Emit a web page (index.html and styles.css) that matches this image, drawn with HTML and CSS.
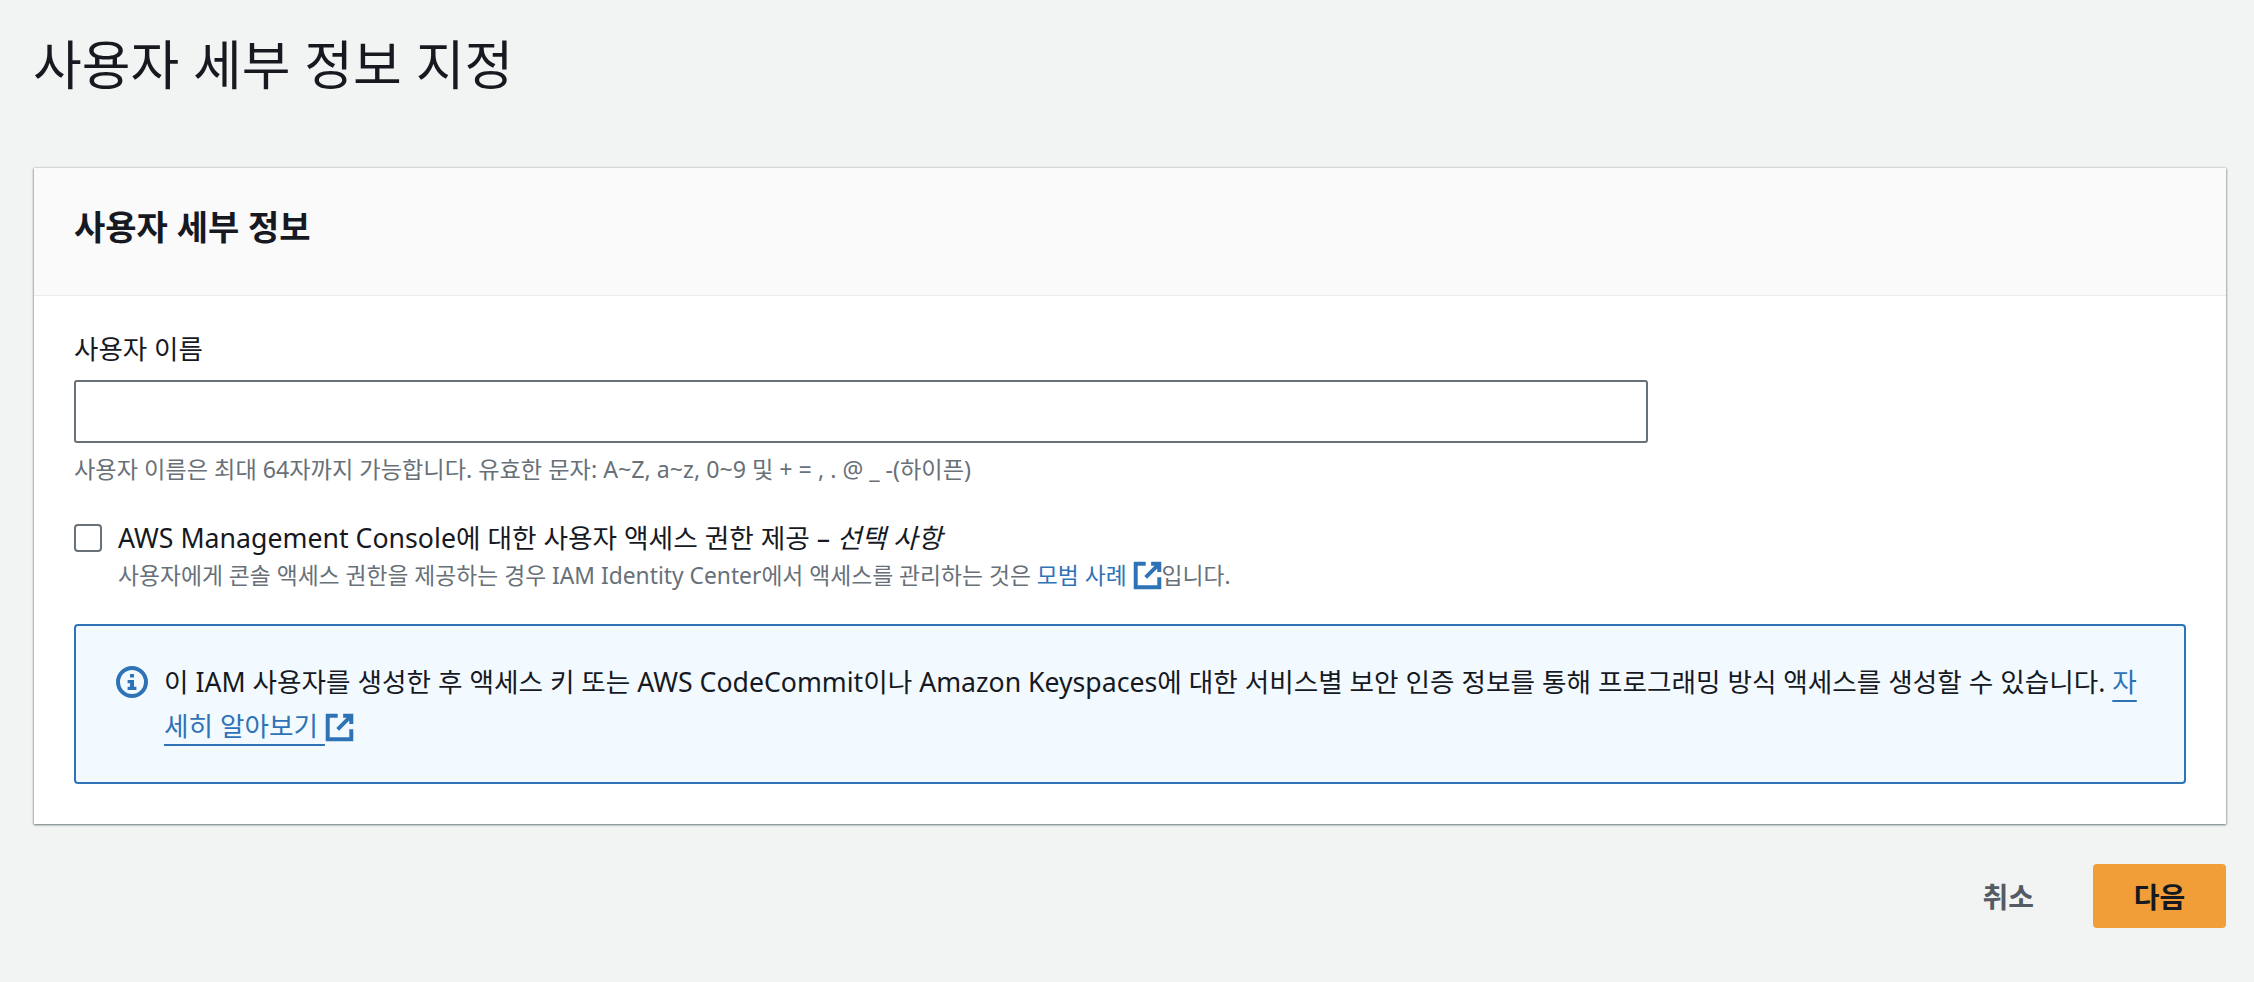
FILE: index.html
```html
<!DOCTYPE html>
<html lang="ko">
<head>
<meta charset="utf-8">
<title>사용자 세부 정보 지정</title>
<link rel="stylesheet" href="styles.css">
</head>
<body>
<main class="page">
  <h1 class="title">사용자 세부 정보 지정</h1>
  <section class="card">
    <header class="card-header"><h2 class="card-title">사용자 세부 정보</h2></header>
    <div class="card-body">
      <div class="field">
        <label class="field-label" for="username">사용자 이름</label>
        <input class="text-input" id="username" type="text">
        <p class="hint">사용자 이름은 최대 64자까지 가능합니다. 유효한 문자: A~Z, a~z, 0~9 및 + = , . @ _ -(하이픈)</p>
      </div>
      <div class="check-row">
        <span class="checkbox"></span>
        <div class="check-text">
          <div class="check-label">AWS Management Console에 대한 사용자 액세스 권한 제공 – <em>선택 사항</em></div>
          <div class="check-desc">사용자에게 콘솔 액세스 권한을 제공하는 경우 IAM Identity Center에서 액세스를 관리하는 것은 <a class="plain-link">모범 사례</a> <svg class="ext-icon" viewBox="0 0 16 16"><path d="M10 1.5h4.5V6M14 2L7 9M14.5 9v5.5h-13v-13H7"/></svg>입니다.</div>
        </div>
      </div>
      <div class="alert">
        <svg class="info-icon" viewBox="0 0 16 16"><circle class="info-ring" cx="8" cy="8" r="7"/><path class="info-glyph" d="M7 4h2v1.8H7zM5.8 7h3.2v3.4h1.2V12H5.8v-1.6H7V8.6H5.8z"/></svg>
        <p class="alert-text">이 IAM 사용자를 생성한 후 액세스 키 또는 AWS CodeCommit이나 Amazon Keyspaces에 대한 서비스별 보안 인증 정보를 통해 프로그래밍 방식 액세스를 생성할 수 있습니다. <a class="under-link">자세히 알아보기&nbsp;</a><svg class="ext-icon" viewBox="0 0 16 16"><path d="M10 1.5h4.5V6M14 2L7 9M14.5 9v5.5h-13v-13H7"/></svg></p>
      </div>
    </div>
  </section>
  <div class="actions">
    <button class="btn btn-link" type="button">취소</button>
    <button class="btn btn-primary" type="button">다음</button>
  </div>
</main>
</body>
</html>
```
FILE: styles.css
```css
* { box-sizing: border-box; }
html, body { margin: 0; height: 100%; }
body {
  background: #f2f3f3;
  color: #16191f;
  font-family: "Noto Sans", "Noto Sans CJK KR", sans-serif;
}
.page { padding: 31px 28px 0 34px; }
.title {
  margin: 0 0 69px -1px;
  font-size: 53px;
  line-height: 68px;
  font-weight: 400;
}
.card {
  background: #fff;
  box-shadow: 0 1px 2px rgba(0, 28, 36, .5), 1px 0 2px rgba(0, 28, 36, .15), -1px 0 2px rgba(0, 28, 36, .15);
}
.card-header {
  height: 128px;
  padding: 0 40px 10px;
  display: flex;
  align-items: center;
  background: #fafafa;
  border-bottom: 1px solid #eaeded;
}
.card-title { margin: 0; font-size: 34px; line-height: 44px; font-weight: 700; }
.card-body { padding: 35px 40px 40px; }
.field-label { display: block; font-size: 26.5px; line-height: 36px; }
.text-input {
  display: block;
  width: 1574px;
  height: 63px;
  margin-top: 13px;
  background: #fff;
  border: 2px solid #687078;
  border-radius: 3px;
}
.hint { margin: 11px 0 0; font-size: 23.2px; line-height: 30px; color: #687078; }
.check-row { display: flex; gap: 16px; margin-top: 38px; }
.checkbox {
  flex: none;
  width: 28px;
  height: 28px;
  margin-top: 2px;
  background: #fff;
  border: 2px solid #687078;
  border-radius: 4px;
}
.check-label { font-size: 26.7px; line-height: 38px; margin-top: -3px; }
.check-desc { font-size: 22.8px; line-height: 30px; color: #687078; margin-top: 4px; }
.plain-link { color: #2f73b7; }
.alert {
  display: flex;
  gap: 16px;
  margin-top: 33px;
  padding: 34px 40px 34px 40px;
  background: #f2faff;
  border: 2px solid #2f73b7;
  border-radius: 4px;
}
.alert-text { margin: 0; font-size: 26.65px; line-height: 44px; }
.under-link { color: #2f73b7; text-decoration: underline; text-underline-offset: 8px; text-decoration-thickness: 2px; }
.ext-icon {
  display: inline-block;
  width: 29px;
  height: 29px;
  vertical-align: -6px;
  fill: none;
  stroke: #2f73b7;
  stroke-width: 2.2;
}
.info-icon {
  flex: none;
  width: 32px;
  height: 32px;
  margin-top: 6px;
}
.info-ring { fill: none; stroke: #2f73b7; stroke-width: 2; }
.info-glyph { fill: #2f73b7; }
.actions { display: flex; justify-content: flex-end; align-items: center; gap: 59px; margin-top: 40px; }
.btn {
  height: 64px;
  font: 700 28px "Noto Sans", "Noto Sans CJK KR", sans-serif;
  border: 0;
  border-radius: 4px;
  padding: 0;
}
.btn-link { background: none; color: #545b64; }
.btn-primary { width: 133px; background: #f29e38; color: #16191f; }
```
